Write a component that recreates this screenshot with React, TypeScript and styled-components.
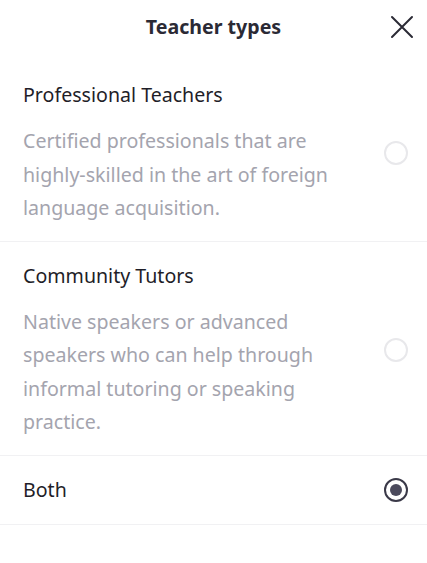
import styled, { createGlobalStyle } from 'styled-components';

const GlobalStyle = createGlobalStyle`
	html, body {
		margin: 0;
		padding: 0;
		background: #ffffff;
		font-family: 'Noto Sans', 'Open Sans', sans-serif;
	}
`;

type Option = {
	id: string;
	title: string;
	description?: string;
};

const options: Option[] = [
	{
		id: 'pro',
		title: 'Professional Teachers',
		description: 'Certified professionals that are highly-skilled in the art of foreign language acquisition.',
	},
	{
		id: 'community',
		title: 'Community Tutors',
		description:
			'Native speakers or advanced speakers who can help through informal tutoring or speaking practice.',
	},
	{ id: 'both', title: 'Both' },
];

const CloseIcon = () => (
	<svg width="24" height="24" viewBox="0 0 24 24" fill="none">
		<path d="M2 2L22 22M22 2L2 22" stroke="#2b2a35" strokeWidth="2" strokeLinecap="round" />
	</svg>
);

export default function App() {
	const selected = 'both';
	return (
		<>
			<GlobalStyle />
			<Sheet>
				<Header>
					<Title>Teacher types</Title>
					<CloseButton aria-label="Close">
						<CloseIcon />
					</CloseButton>
				</Header>
				{options.map((option) => (
					<OptionRow key={option.id} $compact={!option.description}>
						<OptionText>
							<OptionTitle>{option.title}</OptionTitle>
							{option.description && <OptionDescription>{option.description}</OptionDescription>}
						</OptionText>
						<Radio $checked={option.id === selected} />
					</OptionRow>
				))}
			</Sheet>
		</>
	);
}

const Sheet = styled.div`
	width: 427px;
	min-height: 563px;
	background: #ffffff;
`;

const Header = styled.div`
	position: relative;
	height: 61px;
	display: flex;
	justify-content: center;
	padding-top: 13px;
	box-sizing: border-box;
`;

const Title = styled.h1`
	margin: 0;
	font-size: 19.6px;
	line-height: 28px;
	font-weight: 700;
	color: #2b2a35;
`;

const CloseButton = styled.button`
	position: absolute;
	top: 14px;
	right: 12px;
	width: 26px;
	height: 26px;
	padding: 1px;
	border: none;
	background: none;
	display: flex;
	align-items: center;
	justify-content: center;
`;

const OptionRow = styled.div<{ $compact: boolean }>`
	display: flex;
	align-items: center;
	justify-content: space-between;
	padding: ${({ $compact }) => ($compact ? '20px 19px 20px 23px' : '20px 19px 16px 23px')};
	border-bottom: 1px solid #f1f1f3;
`;

const OptionText = styled.div`
	width: 335px;
	display: flex;
	flex-direction: column;
	gap: 15px;
`;

const OptionTitle = styled.div`
	font-size: 19.6px;
	line-height: 28px;
	color: #1f1e28;
`;

const OptionDescription = styled.div`
	font-size: 19.6px;
	line-height: 33.5px;
	color: #a4a4ae;
`;

const Radio = styled.div<{ $checked: boolean }>`
	flex-shrink: 0;
	width: 24px;
	height: 24px;
	box-sizing: border-box;
	border-radius: 50%;
	border: 2px solid ${({ $checked }) => ($checked ? '#3a3948' : '#e8e8eb')};
	display: flex;
	align-items: center;
	justify-content: center;

	&::after {
		content: '';
		display: ${({ $checked }) => ($checked ? 'block' : 'none')};
		width: 12px;
		height: 12px;
		border-radius: 50%;
		background: #4b4a5c;
	}
`;
